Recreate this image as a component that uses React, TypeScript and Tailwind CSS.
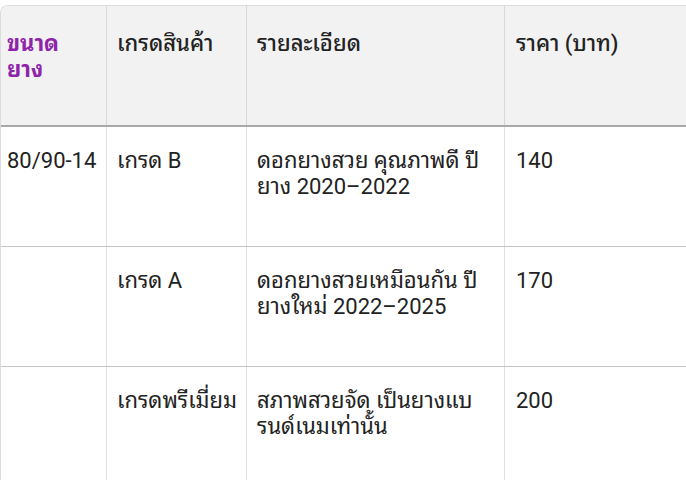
import React from "react";

const rows = [
  { size: "80/90-14", grade: "เกรด B", detail: ["ดอกยางสวย คุณภาพดี ปี", "ยาง 2020–2022"], price: "140" },
  { size: "", grade: "เกรด A", detail: ["ดอกยางสวยเหมือนกัน ปี", "ยางใหม่ 2022–2025"], price: "170" },
  { size: "", grade: "เกรดพรีเมี่ยม", detail: ["สภาพสวยจัด เป็นยางแบ", "รนด์เนมเท่านั้น"], price: "200" },
];

export default function App() {
  return (
    <div
      className="w-[686px] h-[480px] overflow-hidden bg-white text-[22px] leading-[26px] text-[#222]"
      style={{ fontFamily: "Roboto, 'Noto Sans Thai Looped', 'Noto Sans Thai UI', 'Droid Sans Thai', Loma, Garuda, Waree, 'Noto Sans Thai', 'Noto Sans', sans-serif" }}
    >
      <div className="mt-[5px] w-[760px] rounded-tl-[8px] border-t border-l border-[#dcdcdc] overflow-hidden">
        <div className="flex h-[121px] bg-[#f2f2f2] border-b-2 border-[#a8a8a8]">
          <div className="w-[106px] pl-[6px] pt-[25px] font-bold text-[#8e24aa] border-r border-[#d8d8d8]">ขนาด<br />ยาง</div>
          <div className="w-[140px] pl-[10px] pt-[25px] font-medium border-r border-[#d8d8d8] whitespace-nowrap">เกรดสินค้า</div>
          <div className="w-[258px] pl-[10px] pt-[25px] font-medium border-r border-[#d8d8d8]">รายละเอียด</div>
          <div className="flex-1 pl-[11px] pt-[25px] font-medium">ราคา (บาท)</div>
        </div>
        {rows.map((r, i) => (
          <div key={i} className="flex h-[120px] border-b border-[#c4c4c4]">
            <div className="w-[106px] pl-[6px] pt-[21px] border-r border-[#e0e0e0]">{r.size}</div>
            <div className="w-[140px] pl-[10px] pt-[21px] border-r border-[#e0e0e0] whitespace-nowrap">{r.grade}</div>
            <div className="w-[258px] pl-[10px] pt-[21px] border-r border-[#e0e0e0] whitespace-nowrap">
              {r.detail[0]}
              <br />
              {r.detail[1]}
            </div>
            <div className="flex-1 pl-[11px] pt-[21px]">{r.price}</div>
          </div>
        ))}
      </div>
    </div>
  );
}
